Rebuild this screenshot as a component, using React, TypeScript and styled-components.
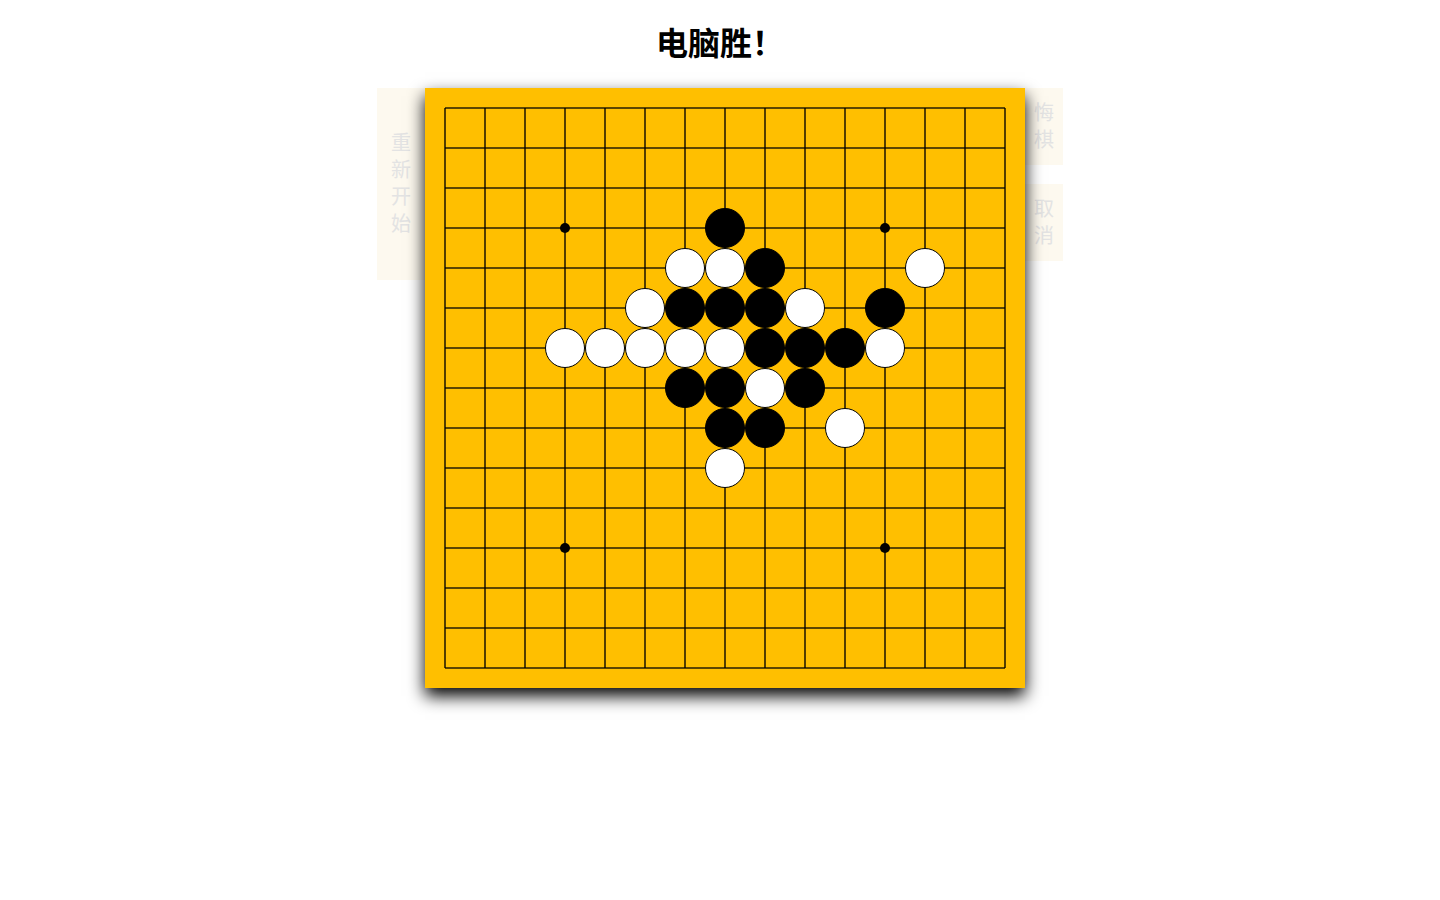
import React from 'react';
import styled, { createGlobalStyle } from 'styled-components';

const GlobalStyle = createGlobalStyle`
  body {
    margin: 0;
    background: #fff;
    font-family: 'Noto Sans CJK SC', 'Noto Sans', sans-serif;
  }
`;

const Page = styled.div`
  box-sizing: border-box;
  min-height: 100vh;
  display: flex;
  flex-direction: column;
  align-items: center;
  padding-top: 21px;
`;

const Title = styled.h1`
  margin: 0 0 26px 0;
  font-size: 32px;
  line-height: 41px;
  font-weight: 700;
  color: #000;
`;

const Row = styled.div`
  display: flex;
  align-items: flex-start;
`;

const Side = styled.div`
  display: flex;
  flex-direction: column;
  gap: 19px;
`;

const SideButton = styled.button<{ $w: number; $h: number }>`
  width: ${(p) => p.$w}px;
  height: ${(p) => p.$h}px;
  padding: 0 0 4px 0;
  border: none;
  background: #fdf9ef;
  color: #e3e3e3;
  font-family: 'Noto Sans CJK SC', sans-serif;
  font-size: 20px;
  line-height: 27px;
  display: flex;
  align-items: center;
  justify-content: center;
  cursor: pointer;
`;

const VerticalText = styled.span`
  width: 20px;
  word-break: break-all;
  text-align: center;
`;

const Board = styled.div`
  position: relative;
  width: 600px;
  height: 600px;
  background: #ffbf00;
  box-shadow: 0 8px 16px #000;
  z-index: 1;
`;

const Grid = styled.svg`
  position: absolute;
  left: 0;
  top: 0;
`;

const Stone = styled.div<{ $black: boolean }>`
  position: absolute;
  width: 40px;
  height: 40px;
  margin: -20px 0 0 -20px;
  box-sizing: border-box;
  border-radius: 50%;
  background: ${(p) => (p.$black ? '#000' : '#fff')};
  border: 1px solid #000;
`;

const N = 15;
const GAP = 40;
const OFF = 20;

// [col, row, black]
const stones: [number, number, boolean][] = [
  [7, 3, true],
  [6, 4, false], [7, 4, false], [8, 4, true], [12, 4, false],
  [5, 5, false], [6, 5, true], [7, 5, true], [8, 5, true], [9, 5, false], [11, 5, true],
  [3, 6, false], [4, 6, false], [5, 6, false], [6, 6, false], [7, 6, false],
  [8, 6, true], [9, 6, true], [10, 6, true], [11, 6, false],
  [6, 7, true], [7, 7, true], [8, 7, false], [9, 7, true],
  [7, 8, true], [8, 8, true], [10, 8, false],
  [7, 9, false],
];

const stars = [
  [3, 3], [11, 3], [3, 11], [11, 11],
];

export default function App() {
  const end = OFF + GAP * (N - 1);
  return (
    <>
      <GlobalStyle />
      <Page>
        <Title>电脑胜！</Title>
        <Row>
          <Side>
            <SideButton $w={48} $h={192}>
              <VerticalText>重新开始</VerticalText>
            </SideButton>
          </Side>
          <Board>
            <Grid width={600} height={600}>
              {Array.from({ length: N }).map((_, i) => (
                <g key={i} stroke="#000" strokeOpacity={0.85} strokeWidth={1.6}>
                  <line x1={OFF} y1={OFF + i * GAP} x2={end} y2={OFF + i * GAP} />
                  <line x1={OFF + i * GAP} y1={OFF} x2={OFF + i * GAP} y2={end} />
                </g>
              ))}
              {stars.map(([c, r]) => (
                <circle key={`${c}-${r}`} cx={OFF + c * GAP} cy={OFF + r * GAP} r={5} fill="#000" />
              ))}
            </Grid>
            {stones.map(([c, r, b]) => (
              <Stone
                key={`${c}-${r}`}
                $black={b}
                style={{ left: OFF + c * GAP, top: OFF + r * GAP }}
              />
            ))}
          </Board>
          <Side>
            <SideButton $w={38} $h={77}>
              <VerticalText>悔棋</VerticalText>
            </SideButton>
            <SideButton $w={38} $h={77}>
              <VerticalText>取消</VerticalText>
            </SideButton>
          </Side>
        </Row>
      </Page>
    </>
  );
}
